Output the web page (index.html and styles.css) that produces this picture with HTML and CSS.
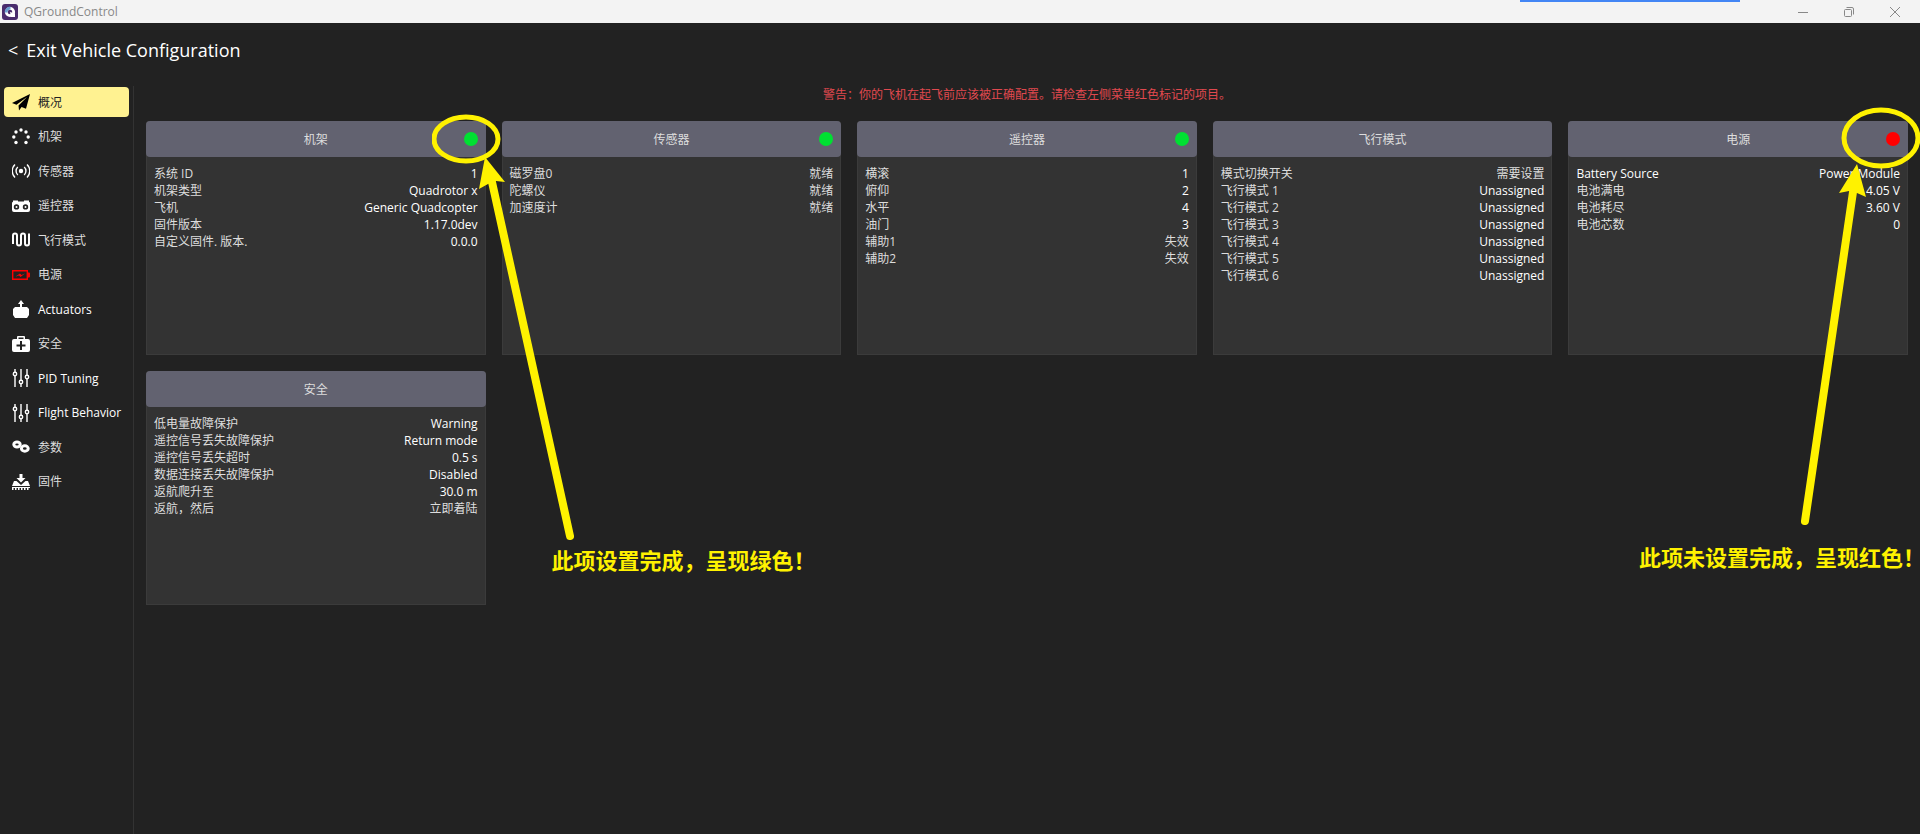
FILE: index.html
```html
<!DOCTYPE html>
<html lang="en">
<head>
  <meta charset="UTF-8">
  <meta name="viewport" content="width=device-width, initial-scale=1.0">
  <title>QGroundControl</title>
  <link rel="stylesheet" href="styles.css">
</head>
<body>
  <header class="titlebar">
    <svg class="logo" viewBox="0 0 16 16">
      <rect width="16" height="16" rx="3" fill="#4a2c6d"/>
      <circle cx="8" cy="8" r="3.700" fill="none" stroke="#fff" stroke-width="2.800"/>
      <path d="M2.600 8.500A5.600 5.600 0 0 1 8.500 2.600V5.600A2.600 2.600 0 0 0 5.600 8.500z" fill="#6b9fcf"/>
      <path d="M8 8l5 1.500v3.500H9z" fill="#fff"/>
    </svg>
    <span class="app-name">QGroundControl</span>
    <div class="progress"></div>
    <div class="window-buttons">
      <button type="button" aria-label="Minimize"><svg viewBox="0 0 12 12"><path d="M1 6.500h10"/></svg></button>
      <button type="button" aria-label="Restore"><svg viewBox="0 0 12 12"><rect x="1.500" y="3.500" width="7" height="7" rx="1"/><path d="M3.500 1.500h5.500a1.500 1.500 0 0 1 1.500 1.500v5.500"/></svg></button>
      <button type="button" aria-label="Close"><svg viewBox="0 0 12 12"><path d="M1 1l10 10M11 1L1 11"/></svg></button>
    </div>
  </header>

  <a class="exit" href="#"><span class="back">&lt;</span>Exit Vehicle Configuration</a>

  <div class="layout">
    <nav class="sidebar">
      <div class="menu">
        <button type="button" class="active" lang="zh">
          <svg viewBox="0 0 18 18"><path d="M18 1L0 10l4.500 1.800L15 4 6.500 12.600 7 17.500l2.600-3.600 4.400 1.900z"/></svg>概况
        </button>
        <button type="button" lang="zh">
          <svg viewBox="0 0 18 18"><circle cx="9" cy="2" r="1.700"/><circle cx="4" cy="4" r="1.700"/><circle cx="14" cy="4" r="1.700"/><circle cx="1.800" cy="9" r="1.700"/><circle cx="16.200" cy="9" r="1.700"/><circle cx="4" cy="14.500" r="1.700"/><circle cx="14" cy="14.500" r="1.700"/></svg>机架
        </button>
        <button type="button" lang="zh">
          <svg viewBox="0 0 18 18"><circle cx="9" cy="9" r="2.200"/><path class="line" d="M5.800 5a5.500 5.500 0 0 0 0 8M12.200 5a5.500 5.500 0 0 1 0 8M3 2.500a9 9 0 0 0 0 13M15 2.500a9 9 0 0 1 0 13"/></svg>传感器
        </button>
        <button type="button" lang="zh">
          <svg viewBox="0 0 18 18"><path fill-rule="evenodd" d="M1 3.500h5v1h6v-1h5v1.200a2 2 0 0 1 1 2.300v6a2 2 0 0 1-2 2H2a2 2 0 0 1-2-2V7a2 2 0 0 1 1-2.300zM4.500 7.200a2.700 2.700 0 1 0 0 5.400 2.700 2.700 0 0 0 0-5.400zM13.500 7.200a2.700 2.700 0 1 0 0 5.400 2.700 2.700 0 0 0 0-5.400z"/><circle cx="4.500" cy="9.900" r="1"/><circle cx="13.500" cy="9.900" r="1"/></svg>遥控器
        </button>
        <button type="button" lang="zh">
          <svg viewBox="0 0 18 18"><path class="line thick" d="M1 13V4.500a2 2 0 0 1 4 0v8a2 2 0 0 0 4 0v-8a2 2 0 0 1 4 0v8a2 2 0 0 0 4 0V2.500"/></svg>飞行模式
        </button>
        <button type="button" class="alert" lang="zh">
          <svg viewBox="0 0 18 18"><path class="line" d="M.7 4.700h14.600v8.600H.7z"/><path d="M16 6.500h1a1 1 0 0 1 1 1v3a1 1 0 0 1-1 1h-1zM3.500 10.500l4.500-3 1.500 1.500 3.500-1.500-4.500 3.500-1.500-1.500z"/></svg>电源
        </button>
        <button type="button">
          <svg viewBox="0 0 18 18"><path d="M9 0l3 4h-2v3h5l2 2v6l-2 3H3l-2-3V9l2-2h5V4H6z"/></svg>Actuators
        </button>
        <button type="button" lang="zh">
          <svg viewBox="0 0 18 18"><path fill-rule="evenodd" d="M6 1h6a1 1 0 0 1 1 1v2h3a2 2 0 0 1 2 2v9a2 2 0 0 1-2 2H2a2 2 0 0 1-2-2V6a2 2 0 0 1 2-2h3V2a1 1 0 0 1 1-1zM6.500 2.500V4h5V2.500zM8 6v3.500H4.500v2H8V15h2v-3.500h3.500v-2H10V6z"/></svg>安全
        </button>
        <button type="button">
          <svg viewBox="0 0 18 18"><path class="line" d="M3 0v3M3 7v11M9 0v11M9 15v3M15 0v6M15 10v8"/><circle class="line" cx="3" cy="5" r="1.700"/><circle class="line" cx="9" cy="13" r="1.700"/><circle class="line" cx="15" cy="8" r="1.700"/></svg>PID Tuning
        </button>
        <button type="button">
          <svg viewBox="0 0 18 18"><path class="line" d="M3 0v3M3 7v11M9 0v11M9 15v3M15 0v6M15 10v8"/><circle class="line" cx="3" cy="5" r="1.700"/><circle class="line" cx="9" cy="13" r="1.700"/><circle class="line" cx="15" cy="8" r="1.700"/></svg>Flight Behavior
        </button>
        <button type="button" lang="zh">
          <svg viewBox="0 0 18 18"><ellipse class="gear" cx="5" cy="6.500" rx="3.200" ry="2.500"/><ellipse class="gear" cx="12.800" cy="10.500" rx="3.400" ry="2.700"/></svg>参数
        </button>
        <button type="button" lang="zh">
          <svg viewBox="0 0 18 18"><path d="M7.500 1h3v4h3L9 9.500 4.500 5h3zM2 8h2.500L9 12l4.500-4H16l2 5H0zM0 14h18v1H0zM0 15h1.500v2H0zM3 15h1.500v2H3zM6 15h1.500v2H6zM9 15h1.500v2H9zM12 15h1.500v2H12zM15 15h1.500v2H15z"/></svg>固件
        </button>
      </div>
    </nav>

    <main class="content">
      <p class="warning" lang="zh">警告：你的飞机在起飞前应该被正确配置。请检查左侧菜单红色标记的项目。</p>
      <div class="cards">
        <section class="card">
          <button type="button" class="card-head" lang="zh">机架<span class="dot green"></span></button>
          <table>
            <tr><th lang="zh">系统 ID</th><td>1</td></tr>
            <tr><th lang="zh">机架类型</th><td>Quadrotor x</td></tr>
            <tr><th lang="zh">飞机</th><td>Generic Quadcopter</td></tr>
            <tr><th lang="zh">固件版本</th><td>1.17.0dev</td></tr>
            <tr><th lang="zh">自定义固件. 版本.</th><td>0.0.0</td></tr>
          </table>
          <div class="note note-done">
            <svg width="150" height="430" viewBox="432 112 150 430">
              <ellipse cx="466" cy="139" rx="32" ry="22"/>
              <path d="M492 182L570 536"/>
              <polygon points="485,157 479,189 488,184 496,181 505,182"/>
            </svg>
            <p lang="zh">此项设置完成，呈现绿色！</p>
          </div>
        </section>

        <section class="card">
          <button type="button" class="card-head" lang="zh">传感器<span class="dot green"></span></button>
          <table>
            <tr><th lang="zh">磁罗盘0</th><td lang="zh">就绪</td></tr>
            <tr><th lang="zh">陀螺仪</th><td lang="zh">就绪</td></tr>
            <tr><th lang="zh">加速度计</th><td lang="zh">就绪</td></tr>
          </table>
        </section>

        <section class="card">
          <button type="button" class="card-head" lang="zh">遥控器<span class="dot green"></span></button>
          <table>
            <tr><th lang="zh">横滚</th><td>1</td></tr>
            <tr><th lang="zh">俯仰</th><td>2</td></tr>
            <tr><th lang="zh">水平</th><td>4</td></tr>
            <tr><th lang="zh">油门</th><td>3</td></tr>
            <tr><th lang="zh">辅助1</th><td lang="zh">失效</td></tr>
            <tr><th lang="zh">辅助2</th><td lang="zh">失效</td></tr>
          </table>
        </section>

        <section class="card">
          <button type="button" class="card-head" lang="zh">飞行模式</button>
          <table>
            <tr><th lang="zh">模式切换开关</th><td lang="zh">需要设置</td></tr>
            <tr><th lang="zh">飞行模式 1</th><td>Unassigned</td></tr>
            <tr><th lang="zh">飞行模式 2</th><td>Unassigned</td></tr>
            <tr><th lang="zh">飞行模式 3</th><td>Unassigned</td></tr>
            <tr><th lang="zh">飞行模式 4</th><td>Unassigned</td></tr>
            <tr><th lang="zh">飞行模式 5</th><td>Unassigned</td></tr>
            <tr><th lang="zh">飞行模式 6</th><td>Unassigned</td></tr>
          </table>
        </section>

        <section class="card">
          <button type="button" class="card-head" lang="zh">电源<span class="dot red"></span></button>
          <table>
            <tr><th>Battery Source</th><td>Power Module</td></tr>
            <tr><th lang="zh">电池满电</th><td>4.05 V</td></tr>
            <tr><th lang="zh">电池耗尽</th><td>3.60 V</td></tr>
            <tr><th lang="zh">电池芯数</th><td>0</td></tr>
          </table>
          <div class="note note-todo">
            <svg width="122" height="428" viewBox="1799 105 122 428">
              <ellipse cx="1881" cy="138" rx="37" ry="28"/>
              <path d="M1853 192L1805 521"/>
              <polygon points="1857,164 1839,193 1849,191 1857,193 1866,197"/>
            </svg>
            <p lang="zh">此项未设置完成，呈现红色！</p>
          </div>
        </section>

        <section class="card">
          <button type="button" class="card-head" lang="zh">安全</button>
          <table>
            <tr><th lang="zh">低电量故障保护</th><td>Warning</td></tr>
            <tr><th lang="zh">遥控信号丢失故障保护</th><td>Return mode</td></tr>
            <tr><th lang="zh">遥控信号丢失超时</th><td>0.5 s</td></tr>
            <tr><th lang="zh">数据连接丢失故障保护</th><td>Disabled</td></tr>
            <tr><th lang="zh">返航爬升至</th><td>30.0 m</td></tr>
            <tr><th lang="zh">返航，然后</th><td lang="zh">立即着陆</td></tr>
          </table>
        </section>
      </div>
    </main>
  </div>
</body>
</html>
```
FILE: styles.css
```css
* {
  box-sizing: border-box;
}
body {
  margin: 0;
  min-height: 100vh;
  display: flex;
  flex-direction: column;
  overflow-x: hidden;
  background: #222;
  color: #fff;
  font-family: "Open Sans", "Noto Sans CJK SC", sans-serif;
  font-size: 12px;
  line-height: 17px;
}
button {
  border: 0;
  padding: 0;
  background: none;
  color: inherit;
  font: inherit;
}
p {
  margin: 0;
}
[lang="zh"] {
  color: #ddd;
}

/* window title bar */
.titlebar {
  position: relative;
  display: flex;
  align-items: center;
  height: 23px;
  padding-left: 2px;
  background: #f3f3f3;
  color: #888;
}
.logo {
  width: 16px;
  height: 16px;
}
.app-name {
  margin-left: 6px;
}
.progress {
  position: absolute;
  top: 0;
  right: 180px;
  width: 220px;
  height: 2px;
  background: #4285f4;
}
.window-buttons {
  display: flex;
  margin-left: auto;
  padding-right: 2px;
}
.window-buttons button {
  display: flex;
  align-items: center;
  justify-content: center;
  width: 46px;
  height: 20px;
}
.window-buttons svg {
  width: 12px;
  height: 12px;
  fill: none;
  stroke: #888;
}

.exit {
  display: flex;
  align-items: center;
  height: 63px;
  padding: 0 8px 8px;
  color: #fff;
  font-size: 18px;
  text-decoration: none;
}
.back {
  margin-right: 8px;
}

.layout {
  display: flex;
  flex: 1;
}

/* left menu */
.sidebar {
  width: 134px;
  padding: 1px 4px 0;
  border-right: 1px solid #333;
}
.menu {
  display: flex;
  flex-direction: column;
  justify-content: space-between;
  min-height: 410px;
}
.menu button {
  display: flex;
  align-items: center;
  gap: 8px;
  height: 30px;
  padding-left: 8px;
  border-radius: 4px;
  white-space: nowrap;
}
.menu svg {
  width: 18px;
  height: 18px;
  fill: #fff;
}
.menu .line {
  fill: none;
  stroke: #fff;
  stroke-width: 1.400;
}
.menu .thick {
  stroke-width: 2;
}
.menu .gear {
  fill: none;
  stroke: #fff;
  stroke-width: 3;
}
.menu .active {
  background: #fff291;
  color: #222;
}
.menu .active svg {
  fill: #000;
}
.menu .alert svg {
  fill: #f00;
}
.menu .alert .line {
  stroke: #f00;
}

/* summary cards */
.content {
  flex: 1;
  padding: 0 12px;
}
.warning {
  margin-bottom: 18px;
  text-align: center;
}
.warning[lang] {
  color: #e0494f;
}
.cards {
  display: grid;
  grid-template-columns: repeat(5, 1fr);
  gap: 16px;
}
.card {
  position: relative;
  min-height: 234px;
  border-radius: 4px 4px 0 0;
  background: #333;
  box-shadow: inset 0 0 0 1px #3b3b3b;
}
.card-head {
  position: relative;
  display: block;
  width: 100%;
  height: 36px;
  border-radius: 4px;
  background: #626270;
}
.dot {
  position: absolute;
  top: 11px;
  right: 8px;
  width: 14px;
  height: 14px;
  border-radius: 50%;
}
.green {
  background: #00e032;
}
.red {
  background: #f00;
}
table {
  width: 100%;
  padding: 8px;
  border-spacing: 0;
}
th, td {
  height: 17px;
  padding: 0;
  font-weight: normal;
  text-align: left;
}
td {
  text-align: right;
}

/* callouts drawn over the cards */
.note {
  position: absolute;
  z-index: 1;
  pointer-events: none;
}
.note svg {
  display: block;
  fill: none;
  stroke: #fff200;
  stroke-width: 5;
}
.note path {
  stroke-width: 8;
  stroke-linecap: round;
}
.note polygon {
  fill: #fff200;
  stroke: none;
}
.note p {
  color: #fff200;
  font-size: 22px;
  font-weight: bold;
  line-height: 32px;
  white-space: nowrap;
}
.note-done {
  top: -9px;
  left: calc(100% - 54px);
}
.note-done p {
  margin-top: 2px;
  margin-left: 120px;
}
.note-todo {
  top: -16px;
  left: calc(100% - 109px);
}
.note-todo p {
  margin-top: 8px;
  margin-left: -160px;
}
```
